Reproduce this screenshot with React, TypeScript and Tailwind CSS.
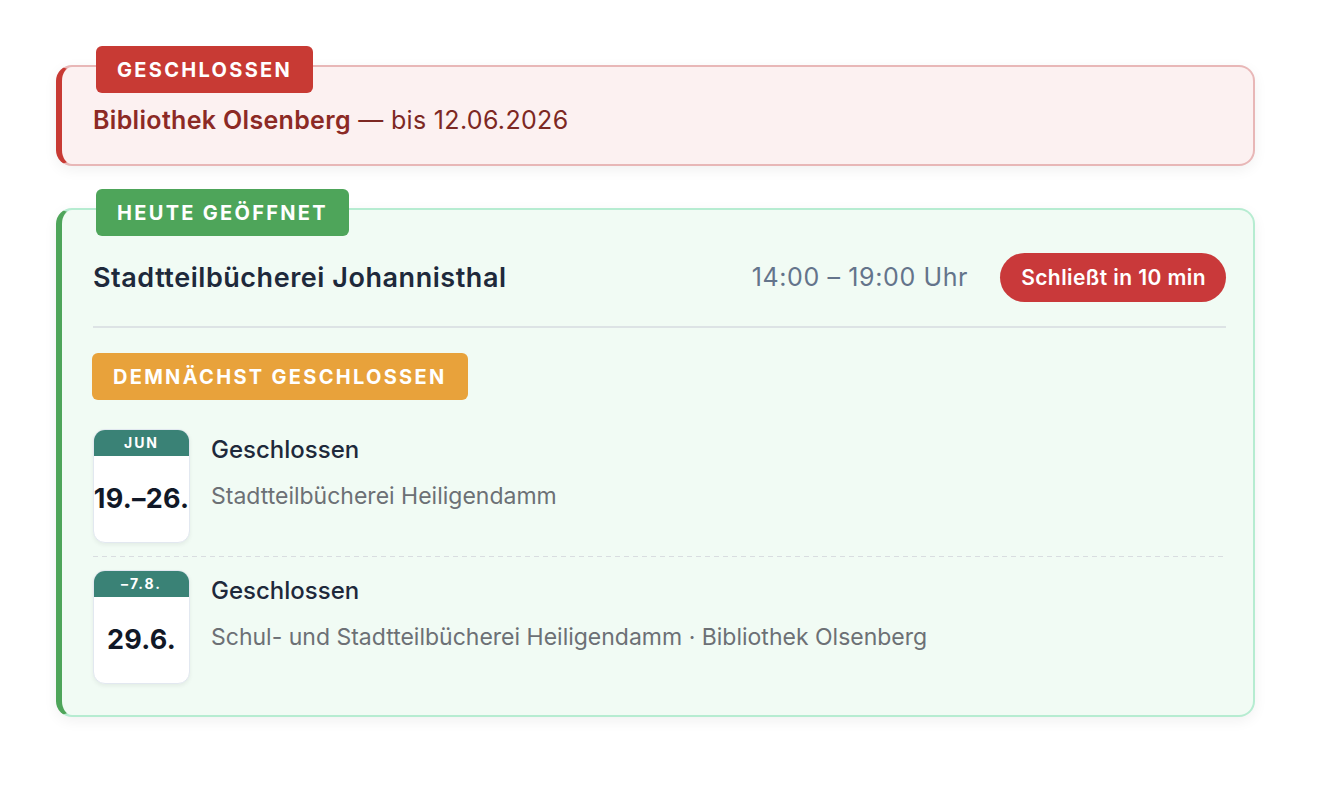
import React from "react";

const font = { fontFamily: "Inter, 'Noto Sans', sans-serif" };

function CalBox({ top, main }: { top: string; main: string }) {
  return (
    <div className="w-[97px] h-[114px] shrink-0 rounded-[12px] bg-white border border-[#e2e8f0] shadow-[0_2px_4px_rgba(0,0,0,0.06)] overflow-hidden flex flex-col">
      <div className="h-[26px] bg-[#3a8276] text-white text-[14px] font-bold tracking-[0.14em] flex items-center justify-center leading-none">
        {top}
      </div>
      <div className="flex-1 flex items-center justify-center text-[#111827] text-[27px] font-bold whitespace-nowrap tracking-[0.01em]">
        {main}
      </div>
    </div>
  );
}

function Item({ top, main, sub }: { top: string; main: string; sub: string }) {
  return (
    <div className="flex gap-[21px]">
      <CalBox top={top} main={main} />
      <div className="flex flex-col pt-[6px]">
        <div className="text-[24px] leading-[30px] text-[#1e293b] font-medium">Geschlossen</div>
        <div className="mt-[16px] text-[23px] leading-[30px] text-[#6c7075]">{sub}</div>
      </div>
    </div>
  );
}

export default function App() {
  return (
    <div style={font} className="min-h-[786px] bg-white pt-[65px] px-[56px]">
      <div className="w-[1199px] flex flex-col gap-[42px]">
        {/* Closed card */}
        <div className="relative h-[101px] rounded-[16px] border-2 border-[#e8b7b7] border-l-[6px] border-l-[#c83a34] bg-[#fcf1f1] shadow-[0_4px_14px_rgba(0,0,0,0.06)] pl-[31px] pt-[37px]">
          <div className="absolute left-[34px] -top-[21px] h-[47px] px-[21px] rounded-[6px] bg-[#c83a34] text-white text-[20px] font-bold tracking-[0.115em] flex items-center">
            GESCHLOSSEN
          </div>
          <div className="text-[25px] leading-[32px] tracking-[0.013em] text-[#7d2823]">
            <span className="font-semibold text-[#8c2a25]">Bibliothek Olsenberg</span> — bis 12.06.2026
          </div>
        </div>

        {/* Open card */}
        <div className="relative rounded-[16px] border-2 border-[#b6ecd1] border-l-[6px] border-l-[#4ea55a] bg-[#f1fbf4] shadow-[0_4px_14px_rgba(0,0,0,0.06)] pl-[31px] pr-[27px] pt-[43px] pb-[31px]">
          <div className="absolute left-[34px] -top-[21px] h-[47px] px-[21px] rounded-[6px] bg-[#4ea55a] text-white text-[20px] font-bold tracking-[0.115em] flex items-center">
            HEUTE GEÖFFNET
          </div>
          <div className="flex items-center h-[49px]">
            <div className="flex-1 pt-[2px] text-[27px] font-semibold tracking-[0.02em] text-[#1e293b]">Stadtteilbücherei Johannisthal</div>
            <div className="text-[25px] tracking-[0.025em] text-[#64748b] mr-[32px]">14:00 – 19:00 Uhr</div>
            <div className="h-[49px] pl-[21px] pr-[20px] rounded-full bg-[#c9393a] text-white text-[21px] tracking-[0.02em] font-semibold flex items-center">
              Schließt in 10 min
            </div>
          </div>
          <div className="mt-[24px] h-[2px] bg-[#dde3e5]" />
          <div className="mt-[25px] -ml-[1px] inline-flex h-[47px] px-[21px] rounded-[6px] bg-[#e8a23b] text-white text-[20px] font-bold tracking-[0.115em] items-center">
            DEMNÄCHST GESCHLOSSEN
          </div>
          <div className="mt-[29px] flex flex-col">
            <Item top="JUN" main="19.–26." sub="Stadtteilbücherei Heiligendamm" />
            <div className="my-[13px] h-px bg-[repeating-linear-gradient(to_right,#d9dde0_0px,#d9dde0_5px,transparent_5px,transparent_9px)]" />
            <Item top="–7.8." main="29.6." sub="Schul- und Stadtteilbücherei Heiligendamm · Bibliothek Olsenberg" />
          </div>
        </div>
      </div>
    </div>
  );
}
